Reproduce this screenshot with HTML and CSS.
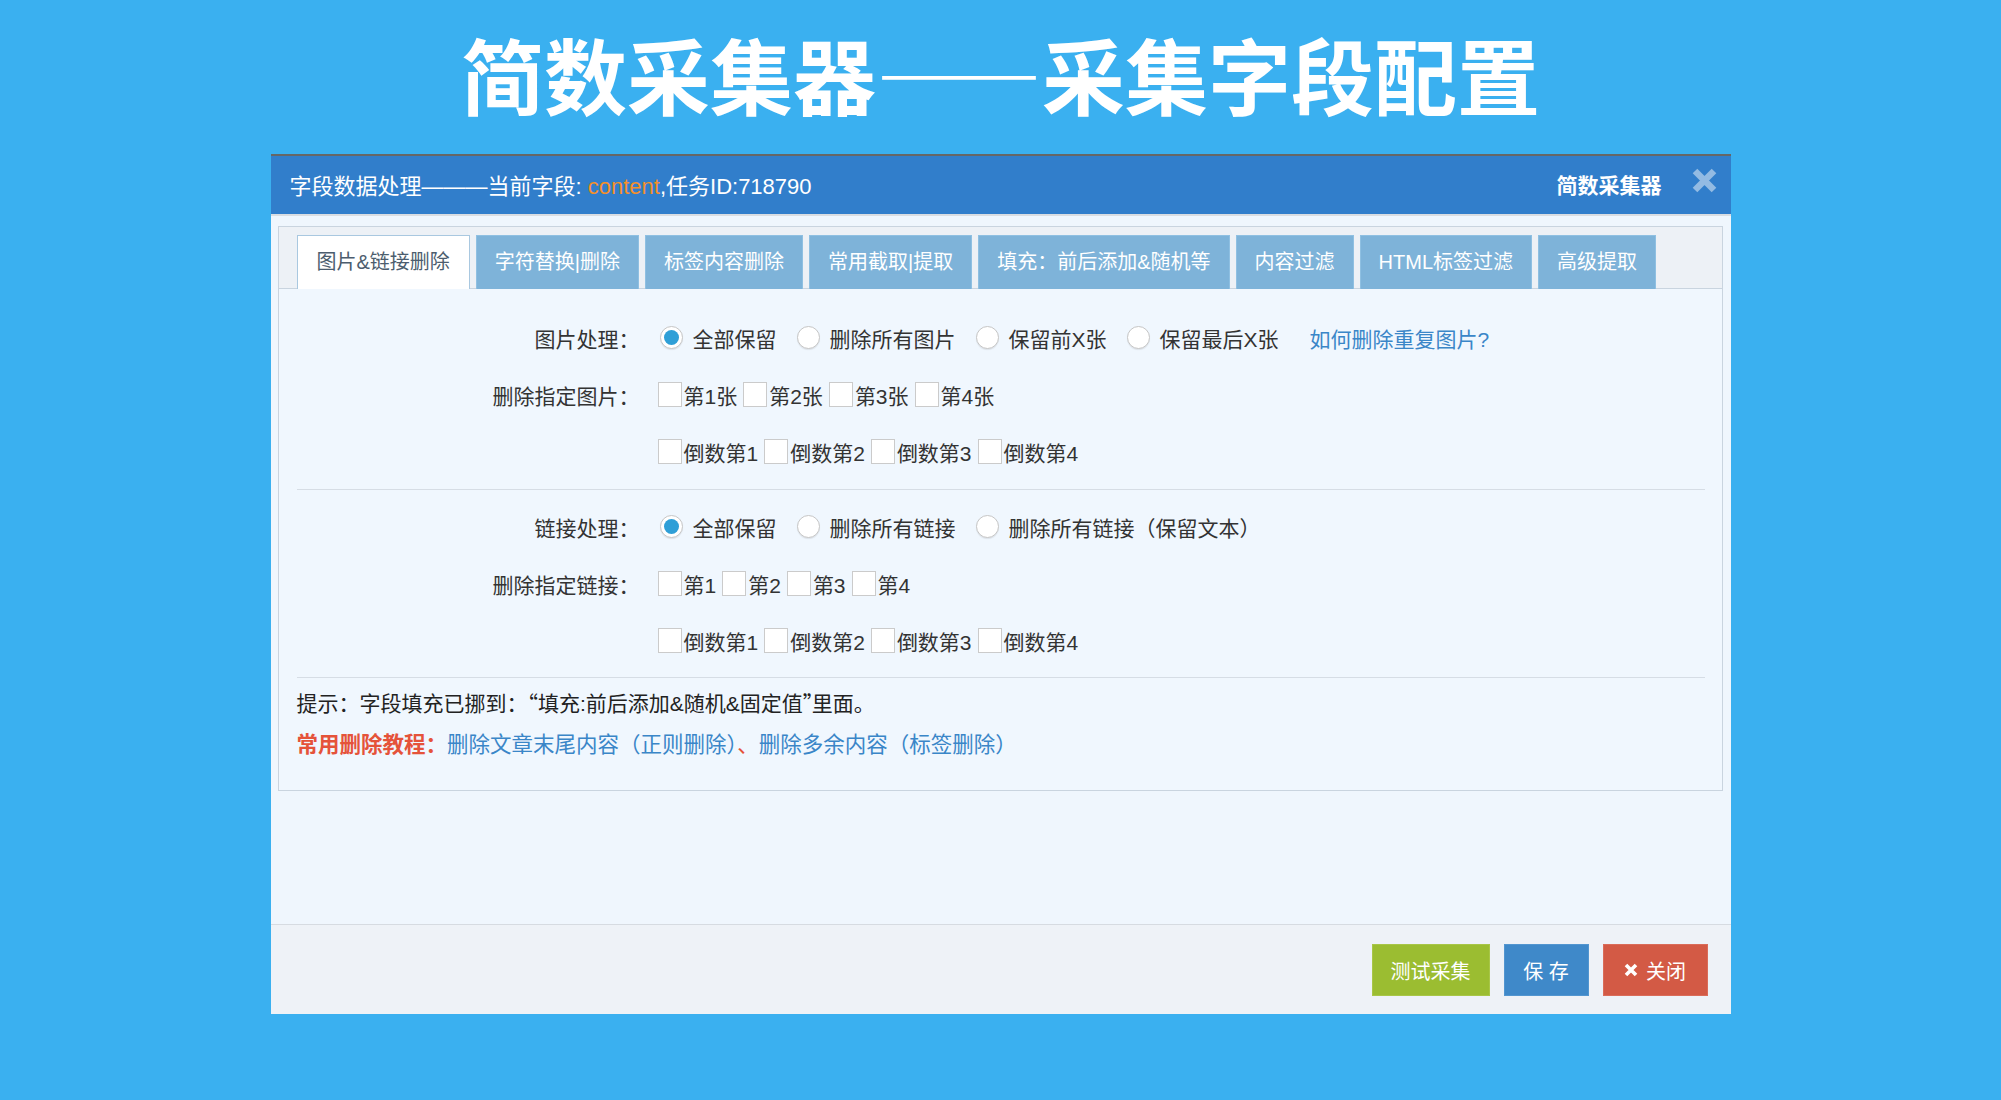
FILE: index.html
```html
<!DOCTYPE html>
<html lang="zh-CN">
<head>
<meta charset="utf-8">
<title>简数采集器——采集字段配置</title>
<link rel="stylesheet" href="styles.css">
</head>
<body>
<h1 class="page-title">简数采集器——采集字段配置</h1>
<div class="dialog">
  <div class="dlg-head">
    <div class="dlg-title">字段数据处理———当前字段: <span class="field">content</span>,任务ID:718790</div>
    <div class="dlg-brand">简数采集器</div>
    <svg class="dlg-close" width="25" height="25" viewBox="0 0 25 25"><path d="M3 3 L22 22 M22 3 L3 22" stroke="#93bbe3" stroke-width="6.5" fill="none"/></svg>
  </div>
  <div class="dlg-body">
    <div class="box">
      <div class="tabs">
        <div class="tab active">图片&amp;链接删除</div>
        <div class="tab">字符替换|删除</div>
        <div class="tab">标签内容删除</div>
        <div class="tab">常用截取|提取</div>
        <div class="tab">填充：前后添加&amp;随机等</div>
        <div class="tab">内容过滤</div>
        <div class="tab">HTML标签过滤</div>
        <div class="tab">高级提取</div>
      </div>
      <div class="panel">
        <div class="row">
          <div class="lbl">图片处理：</div>
          <div class="ctrls">
            <span class="opt"><span class="radio on"></span>全部保留</span>
            <span class="opt"><span class="radio"></span>删除所有图片</span>
            <span class="opt"><span class="radio"></span>保留前X张</span>
            <span class="opt"><span class="radio"></span>保留最后X张</span>
            <span class="help">如何删除重复图片?</span>
          </div>
        </div>
        <div class="row">
          <div class="lbl">删除指定图片：</div>
          <div class="ctrls">
            <span class="ck"><span class="cb"></span>第1张</span>
            <span class="ck"><span class="cb"></span>第2张</span>
            <span class="ck"><span class="cb"></span>第3张</span>
            <span class="ck"><span class="cb"></span>第4张</span>
          </div>
        </div>
        <div class="row">
          <div class="lbl"></div>
          <div class="ctrls">
            <span class="ck"><span class="cb"></span>倒数第1</span>
            <span class="ck"><span class="cb"></span>倒数第2</span>
            <span class="ck"><span class="cb"></span>倒数第3</span>
            <span class="ck"><span class="cb"></span>倒数第4</span>
          </div>
        </div>
        <div class="sep"></div>
        <div class="row">
          <div class="lbl">链接处理：</div>
          <div class="ctrls">
            <span class="opt"><span class="radio on"></span>全部保留</span>
            <span class="opt"><span class="radio"></span>删除所有链接</span>
            <span class="opt"><span class="radio"></span>删除所有链接（保留文本）</span>
          </div>
        </div>
        <div class="row">
          <div class="lbl">删除指定链接：</div>
          <div class="ctrls">
            <span class="ck"><span class="cb"></span>第1</span>
            <span class="ck"><span class="cb"></span>第2</span>
            <span class="ck"><span class="cb"></span>第3</span>
            <span class="ck"><span class="cb"></span>第4</span>
          </div>
        </div>
        <div class="row">
          <div class="lbl"></div>
          <div class="ctrls">
            <span class="ck"><span class="cb"></span>倒数第1</span>
            <span class="ck"><span class="cb"></span>倒数第2</span>
            <span class="ck"><span class="cb"></span>倒数第3</span>
            <span class="ck"><span class="cb"></span>倒数第4</span>
          </div>
        </div>
        <div class="sep sep2"></div>
        <p class="tip">提示：字段填充已挪到：<span class="q">“</span>填充:前后添加&amp;随机&amp;固定值<span class="q q-close">”</span>里面。</p>
        <p class="tut"><b>常用删除教程：</b><span class="lnk">删除文章末尾内容（正则删除）</span>、<span class="lnk">删除多余内容（标签删除）</span></p>
      </div>
    </div>
  </div>
  <div class="dlg-foot">
    <span class="btn btn-test">测试采集</span>
    <span class="btn btn-save">保 存</span>
    <span class="btn btn-close"><svg width="14" height="14" viewBox="0 0 14 14"><path d="M2 2 L12 12 M12 2 L2 12" stroke="#fff" stroke-width="3.6" fill="none"/></svg>关闭</span>
  </div>
</div>
</body>
</html>
```
FILE: styles.css
```css
html, body {
  margin: 0;
  padding: 0;
}
body {
  width: 2001px;
  height: 1100px;
  overflow: hidden;
  background: #3ab0f0;
  font-family: "Liberation Sans", "Noto Sans CJK SC", sans-serif;
  color: #333;
}
.page-title {
  margin: 0;
  padding-top: 13px;
  height: 120px;
  line-height: 120px;
  font-family: "Noto Sans CJK SC", sans-serif;
  font-size: 83px;
  font-weight: 700;
  color: #fff;
  text-align: center;
}
.dialog {
  box-sizing: border-box;
  width: 1460px;
  height: 860px;
  margin: 21px auto 0;
  display: flex;
  flex-direction: column;
  background: #eff6fd;
  border-top: 2px solid #666;
}
.dlg-head {
  box-sizing: border-box;
  height: 60px;
  display: flex;
  align-items: center;
  padding: 0 14px 3px 19px;
  background: #317ecb;
  border-bottom: 2px solid #d9dde2;
  color: #fff;
  font-size: 22px;
}
.dlg-title {
  flex: 1;
  white-space: nowrap;
}
.field {
  color: #f5902a;
}
.dlg-brand {
  font-weight: 700;
  font-size: 21px;
  margin-right: 30px;
}
.dlg-close {
  display: block;
  align-self: flex-start;
  margin-top: 12px;
}
.dlg-body {
  flex: 1;
  padding: 10px 8px 0 7px;
}
.box {
  border: 1px solid #c9d4df;
  background: #f0f7fe;
}
.tabs {
  display: flex;
  gap: 6px;
  padding: 8px 17px 0 18px;
  background: #edf1f6;
  border-bottom: 1px solid #c9d4df;
  height: 53px;
}
.tab {
  box-sizing: border-box;
  height: 54px;
  line-height: 52px;
  padding: 0 18px;
  font-size: 20px;
  color: #fff;
  background: #7eb3d9;
  border: 1px solid #8fc0e2;
  border-bottom: none;
  white-space: nowrap;
}
.tab.active {
  background: #fff;
  color: #4c5d6e;
  border-color: #a9c8e0;
  padding: 0 19px;
}
.panel {
  padding: 20px 17px 29px 18px;
  font-size: 21px;
}
.row {
  display: flex;
  align-items: center;
  height: 57px;
}
.lbl {
  width: 343px;
  text-align: right;
  flex-shrink: 0;
  color: #333;
}
.ctrls {
  display: flex;
  align-items: center;
  margin-left: 18px;
  white-space: nowrap;
}
.opt {
  display: inline-flex;
  align-items: center;
  margin-right: 18px;
}
.radio {
  box-sizing: border-box;
  width: 23px;
  height: 23px;
  border-radius: 50%;
  border: 1px solid #c6c6c6;
  background: #fff;
  margin: 0 10px 0 2px;
  position: relative;
  box-shadow: 0 1px 1px rgba(0,0,0,0.08);
}
.radio.on::after {
  content: "";
  position: absolute;
  left: 3px;
  top: 3px;
  width: 15px;
  height: 15px;
  border-radius: 50%;
  background: #2f9fd7;
}
.help {
  margin-left: 13px;
  color: #3a86c8;
}
.ck {
  display: inline-flex;
  align-items: center;
  margin-right: 6px;
}
.cb {
  box-sizing: border-box;
  width: 24px;
  height: 25px;
  border: 1px solid #cbcbcb;
  background: #fff;
  margin-right: 2px;
}
.sep {
  border-top: 1px solid #d6dde5;
  margin: 9px 0 8px;
}
.sep2 {
  margin: 8px 0 8px;
}
.tip, .tut {
  margin: 0;
  line-height: 32px;
  font-size: 21px;
  color: #222;
}
.q {
  font-family: "Noto Sans CJK SC", sans-serif;
}
.q-close {
  letter-spacing: -12px;
}
.tut {
  margin-top: 9px;
  font-size: 21.5px;
  color: #e5533a;
}
.tut b {
  font-weight: 700;
}
.lnk {
  color: #3a86c8;
}
.dlg-foot {
  box-sizing: border-box;
  height: 90px;
  display: flex;
  justify-content: flex-end;
  align-items: flex-start;
  gap: 14px;
  padding: 19px 23px 0 0;
  background: #eef2f7;
  border-top: 1px solid #d6dbe1;
}
.btn {
  box-sizing: border-box;
  height: 52px;
  display: inline-flex;
  align-items: center;
  justify-content: center;
  padding: 0 19px;
  font-size: 20px;
  color: #fff;
  white-space: pre;
}
.btn-test {
  width: 118px;
  background: #9bbd31;
  border: 1px solid #a8c647;
}
.btn-save {
  width: 85px;
  background: #3f89c9;
  border: 1px solid #5296d0;
}
.btn-close {
  width: 105px;
  background: #d35a45;
  border: 1px solid #da6c59;
  gap: 8px;
}
.btn-close svg {
  display: block;
}
```
